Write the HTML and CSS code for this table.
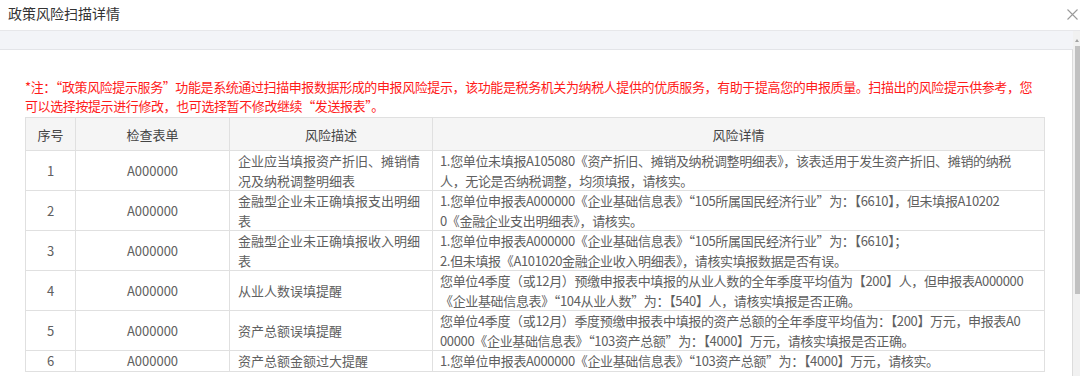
FILE: index.html
```html
<!DOCTYPE html>
<html lang="zh-CN">
<head>
<meta charset="utf-8">
<title>政策风险扫描详情</title>
<link rel="stylesheet" href="styles.css">
</head>
<body>
<div class="dialog">
  <div class="dialog-header">
    <span class="dialog-title">政策风险扫描详情</span>
    <svg class="close" width="11" height="11" viewBox="0 0 11 11"><path d="M0.5 0.5L10.5 10.5M10.5 0.5L0.5 10.5" stroke="#9a9a9a" stroke-width="1.1" fill="none"/></svg>
  </div>
  <div class="dialog-body">
    <div class="scroll-area">
      <div class="panel">
        <p class="notice">*注：“政策风险提示服务”功能是系统通过扫描申报数据形成的申报风险提示，该功能是税务机关为纳税人提供的优质服务，有助于提高您的申报质量。扫描出的风险提示供参考，您<br>可以选择按提示进行修改，也可选择暂不修改继续“发送报表”。</p>
        <table class="risk-table">
          <colgroup>
            <col class="c-no"><col class="c-form"><col class="c-desc"><col class="c-detail">
          </colgroup>
          <thead>
            <tr><th>序号</th><th>检查表单</th><th>风险描述</th><th>风险详情</th></tr>
          </thead>
          <tbody>
            <tr><td class="center">1</td><td class="center">A000000</td><td>企业应当填报资产折旧、摊销情况及纳税调整明细表</td><td class="detail">1.您单位未填报A105080《资产折旧、摊销及纳税调整明细表》，该表适用于发生资产折旧、摊销的纳税<br>人，无论是否纳税调整，均须填报，请核实。</td></tr>
            <tr><td class="center">2</td><td class="center">A000000</td><td>金融型企业未正确填报支出明细表</td><td class="detail">1.您单位申报表A000000《企业基础信息表》“105所属国民经济行业”为：【6610】，但未填报A10202<br>0《金融企业支出明细表》，请核实。</td></tr>
            <tr><td class="center">3</td><td class="center">A000000</td><td>金融型企业未正确填报收入明细表</td><td class="detail">1.您单位申报表A000000《企业基础信息表》“105所属国民经济行业”为：【6610】；<br>2.但未填报《A101020金融企业收入明细表》，请核实填报数据是否有误。</td></tr>
            <tr><td class="center">4</td><td class="center">A000000</td><td>从业人数误填提醒</td><td class="detail">您单位4季度（或12月）预缴申报表中填报的从业人数的全年季度平均值为【200】人，但申报表A000000<br>《企业基础信息表》“104从业人数”为：【540】人，请核实填报是否正确。</td></tr>
            <tr><td class="center">5</td><td class="center">A000000</td><td>资产总额误填提醒</td><td class="detail">您单位4季度（或12月）季度预缴申报表中填报的资产总额的全年季度平均值为：【200】万元，申报表A0<br>00000《企业基础信息表》“103资产总额”为：【4000】万元，请核实填报是否正确。</td></tr>
            <tr><td class="center">6</td><td class="center">A000000</td><td>资产总额金额过大提醒</td><td class="detail">1.您单位申报表A000000《企业基础信息表》“103资产总额”为：【4000】万元，请核实。</td></tr>
          </tbody>
        </table>
      </div>
    </div>
    <div class="scrollbar">
      <span class="scroll-arrow"></span>
      <span class="scroll-thumb"></span>
    </div>
  </div>
</div>
</body>
</html>
```

FILE: styles.css
```css
html, body {
  margin: 0;
  padding: 0;
  background: #ffffff;
}
body {
  font-family: "Noto Sans CJK SC", "Microsoft YaHei", sans-serif;
  font-size: 13px;
  color: #555;
}
.dialog {
  width: 1080px;
  height: 376px;
  overflow: hidden;
  display: flex;
  flex-direction: column;
}
.dialog-header {
  height: 30px;
  flex: none;
  display: flex;
  align-items: center;
  justify-content: space-between;
  padding: 0 2px 4px 8px;
  box-sizing: border-box;
  background: #fff;
}
.dialog-title {
  font-size: 14px;
  color: #333;
  line-height: 20px;
}
.close {
  display: block;
  margin-top: 2px;
}
.dialog-body {
  flex: 1;
  display: flex;
  min-height: 0;
  border-top: 1px solid #e7e7ea;
  background: #f3f4f8;
}
.scroll-area {
  flex: 1;
  padding-top: 18px;
  min-width: 0;
}
.panel {
  height: 100%;
  background: #fff;
  border-top: 1px solid #e3e4e8;
  border-right: 1px solid #dcdcdc;
  padding: 27px 28px 0 25px;
  box-sizing: border-box;
}
.notice {
  margin: 0;
  color: #ff1a1a;
  line-height: 19px;
  white-space: nowrap;
  letter-spacing: -0.4px;
}
.risk-table {
  margin-top: 2px;
  width: 1019px;
  border-collapse: collapse;
  table-layout: fixed;
}
.c-no { width: 50px; }
.c-form { width: 154px; }
.c-desc { width: 203px; }
.c-detail { width: 612px; }
.risk-table th,
.risk-table td {
  border: 1px solid #e0e0e0;
  padding: 0 8px;
  word-break: break-all;
}
.risk-table th {
  height: 32px;
  background: #f5f5f5;
  font-weight: normal;
  color: #444;
  text-align: center;
}
.risk-table td {
  line-height: 19.5px;
  color: #606060;
  vertical-align: middle;
}
.risk-table td.center {
  text-align: center;
}
.risk-table td.detail {
  white-space: nowrap;
  padding-left: 7px;
  letter-spacing: -0.35px;
}
.scrollbar {
  width: 7px;
  flex: none;
  display: flex;
  flex-direction: column;
  align-items: flex-end;
  background: #f1f1f1;
}
.scroll-arrow {
  width: 0;
  height: 0;
  margin: 8px 1px 0 0;
  border-left: 2px solid transparent;
  border-right: 2px solid transparent;
  border-bottom: 3px solid #a3a3a3;
}
.scroll-thumb {
  width: 5px;
  height: 248px;
  margin-top: 4px;
  background: #c1c1c1;
}
```
